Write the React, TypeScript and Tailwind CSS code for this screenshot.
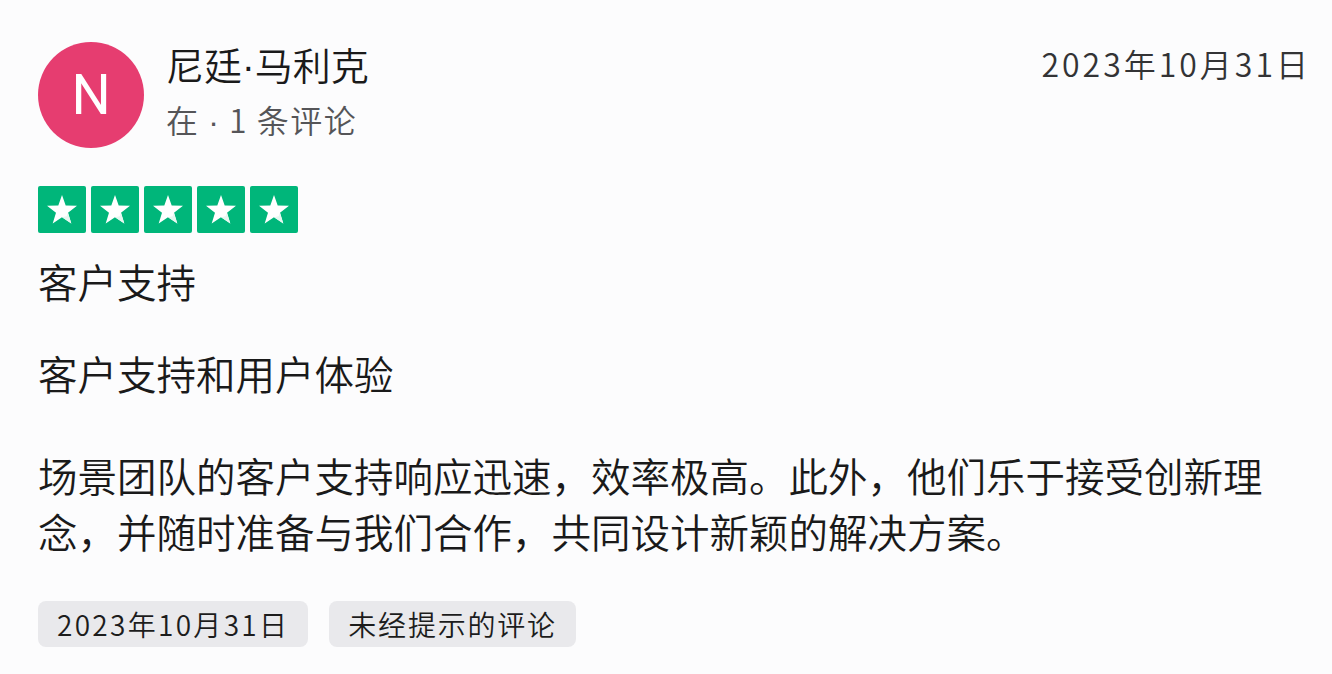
// Review card: reviewer header, star rating, title, body and tag pills

const Star = () => (
  <div className="w-[48px] h-[47px] bg-[#00b67a] rounded-[2px] flex items-center justify-center">
    <svg width="32" height="31" viewBox="0 0 32 31">
      <polygon
        points="16,1 19.7,11.6 31,11.8 22,18.7 25.3,29.6 16,23.2 6.7,29.6 10,18.7 1,11.8 12.3,11.6"
        fill="#ffffff"
      />
      <polygon points="22,18.7 25.3,29.6 16,23.2 20.6,22.3" fill="#e6f7f0" />
    </svg>
  </div>
)

const Tag = ({ children, wide }: { children: React.ReactNode; wide?: boolean }) => (
  <span
    className={
      'h-[46px] px-[19px] rounded-[8px] bg-[#e9e9ec] text-[#1c1c1c] text-[28px] leading-[46px] flex items-center ' +
      (wide ? 'tracking-[2.3px]' : 'tracking-[1.8px]')
    }
  >
    {children}
  </span>
)

const latin = { fontFamily: '"Liberation Sans", Arial, sans-serif' }

const App = () => {
  return (
    <div
      className="w-full h-[674px] bg-[#fcfcfd] pl-[38px] pr-[21px] pt-[42px] text-[#1a1a1a] font-[350] overflow-hidden"
      style={{ fontFamily: '"Noto Sans CJK SC", "Noto Sans", sans-serif' }}
    >
      <div className="flex items-start">
        <div className="w-[106px] h-[106px] rounded-full bg-[#e63d70] flex items-center justify-center shrink-0">
          <span className="text-white text-[55px] leading-none font-normal" style={{ fontFamily: 'Roboto, "Noto Sans", sans-serif' }}>
            N
          </span>
        </div>
        <div className="ml-[22px] flex flex-col">
          <div className="text-[38px] leading-[44px] text-[#1a1a1a]">
            尼廷<span style={latin}>·</span>马利克
          </div>
          <div className="mt-[12px] text-[32px] leading-[36px] text-[#555558] tracking-[1.5px]">
            在 <span style={latin}>·</span> 1 条评论
          </div>
        </div>
        <div className="ml-auto pt-[1px] text-[32px] leading-[40px] text-[#333335] tracking-[3px]">2023年10月31日</div>
      </div>

      <div className="mt-[38px] flex gap-[5px]">
        <Star />
        <Star />
        <Star />
        <Star />
        <Star />
      </div>

      <div className="mt-[24px] text-[39.5px] leading-[48px]">客户支持</div>
      <div className="mt-[44px] text-[39.5px] leading-[48px]">客户支持和用户体验</div>
      <p className="mt-[50px] w-[1250px] text-[39.5px] leading-[56px]">
        场景团队的客户支持响应迅速，效率极高。此外，他们乐于接受创新理念，并随时准备与我们合作，共同设计新颖的解决方案。
      </p>

      <div className="mt-[42px] flex gap-[21px]">
        <Tag wide>2023年10月31日</Tag>
        <Tag>未经提示的评论</Tag>
      </div>
    </div>
  )
}

export default App
